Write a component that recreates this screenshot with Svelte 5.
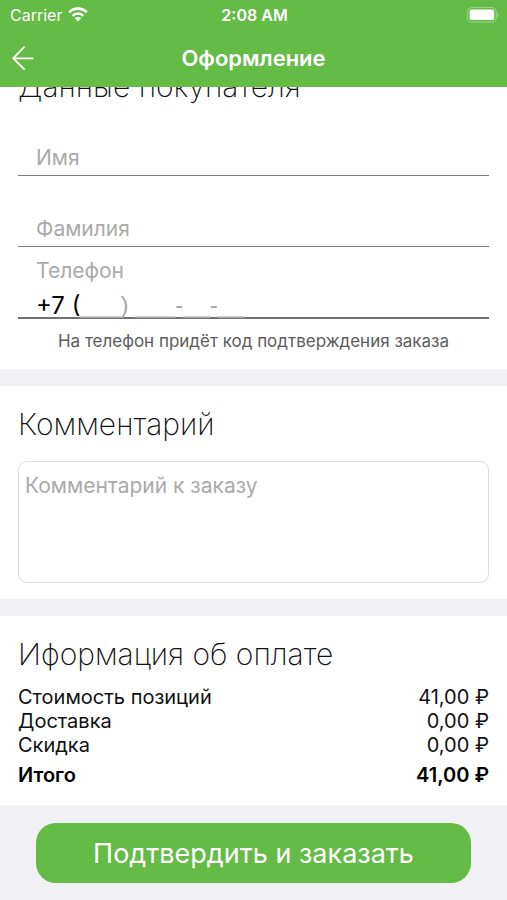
<script lang="ts">
  let firstName = $state('');
  let lastName = $state('');
  let phone = $state('+7 (');
  let comment = $state('');

  const mask = '+7 (___) ___-__-__';

  const costs = [
    { label: 'Стоимость позиций', value: '41,00 ₽' },
    { label: 'Доставка', value: '0,00 ₽' },
    { label: 'Скидка', value: '0,00 ₽' }
  ];
</script>

<div class="screen">
  <header>
    <div class="status">
      <div class="carrier">
        <span>Carrier</span>
        <svg width="20" height="15" viewBox="0 0 20 15" fill="none" stroke="#fff" aria-hidden="true">
          <path d="M1.2 5.2a12.6 12.6 0 0 1 17.6 0" stroke-width="2.6" />
          <path d="M4.5 8.8a7.9 7.9 0 0 1 11 0" stroke-width="2.5" />
          <path d="M10 14.6l-3.2-3.3a4.6 4.6 0 0 1 6.4 0z" fill="#fff" stroke="none" />
        </svg>
      </div>
      <time>2:08 AM</time>
      <svg class="battery" width="32" height="16" viewBox="0 0 32 16" aria-hidden="true">
        <rect x="0.6" y="0.6" width="28.600" height="14.4" rx="4.4" fill="none" stroke="#fff" stroke-opacity="0.4" />
        <rect x="2.600" y="2.600" width="24.6" height="10.4" rx="2" fill="#fff" />
        <path d="M30.400 5.600c1.600.8 1.600 3.800 0 4.600z" fill="#fff" fill-opacity="0.4" />
      </svg>
    </div>
    <nav>
      <button class="back" aria-label="Назад">
        <svg width="22" height="24" viewBox="0 0 22 24" fill="none" stroke="#fff" stroke-width="1.8" stroke-linecap="round" stroke-linejoin="round">
          <path d="M12 1.200L1.200 12.400L12 23M1.200 12.400H20.600" />
        </svg>
      </button>
      <h1>Оформление</h1>
    </nav>
  </header>

  <main>
    <section class="buyer">
      <h2>Данные покупателя</h2>
      <input class="line" bind:value={firstName} placeholder="Имя" aria-label="Имя" />
      <input class="line" bind:value={lastName} placeholder="Фамилия" aria-label="Фамилия" />
      <div class="phone">
        <label for="phone">Телефон</label>
        <div class="masked">
          <span class="mask" aria-hidden="true"><span class="typed">{phone}</span>{mask.slice(phone.length)}</span>
          <input id="phone" type="tel" bind:value={phone} />
        </div>
      </div>
      <p class="hint">На телефон придёт код подтверждения заказа</p>
    </section>

    <section class="comment">
      <h2>Комментарий</h2>
      <textarea bind:value={comment} placeholder="Комментарий к заказу" aria-label="Комментарий"></textarea>
    </section>

    <section class="payment">
      <h2>Иформация об оплате</h2>
      <table>
        <tbody>
          {#each costs as row}
            <tr><th scope="row">{row.label}</th><td>{row.value}</td></tr>
          {/each}
        </tbody>
        <tfoot>
          <tr><th scope="row">Итого</th><td>41,00 ₽</td></tr>
        </tfoot>
      </table>
    </section>
  </main>

  <footer>
    <button class="submit">Подтвердить и заказать</button>
  </footer>
</div>

<style>
  :global(body) {
    background: #f0f0f5;
  }

  .screen {
    min-height: 100vh;
    font-family: Inter, 'Liberation Sans', sans-serif;
    color: #111;
    overflow: hidden;
  }

  input,
  textarea,
  button {
    box-sizing: border-box;
    margin: 0;
    border: 0;
    background: none;
    font-family: inherit;
    outline: none;
  }

  header {
    position: sticky;
    top: 0;
    z-index: 1;
    background: #64bb46;
    color: #fff;
  }

  .status {
    display: grid;
    grid-template-columns: 1fr auto 1fr;
    align-items: center;
    height: 29px;
    padding: 0 8px 0 10px;
    font-size: 16px;
  }

  .carrier {
    display: flex;
    align-items: center;
    gap: 6px;
  }

  .status time {
    font-weight: 600;
  }

  .battery {
    justify-self: end;
  }

  nav {
    display: grid;
    grid-template-columns: 48px 1fr 48px;
    align-items: center;
    height: 58px;
  }

  .back {
    display: flex;
    padding: 12px;
    cursor: pointer;
  }

  h1 {
    margin: 0;
    font-size: 22px;
    line-height: 28px;
    font-weight: 600;
    text-align: center;
  }

  section {
    padding: 19px 18px 16px;
    background: #fff;
  }

  section + section {
    margin-top: 17px;
  }

  h2 {
    margin: 0;
    font-size: 30px;
    line-height: 38px;
    font-weight: 200;
  }

  /* The form is scrolled part-way under the header */
  .buyer {
    margin-top: -20px;
    padding-top: 0;
  }

  .line {
    display: block;
    width: 100%;
    height: 36px;
    margin-top: 35px;
    padding: 0 18px;
    border-bottom: 1px solid #7c7c7c;
    font-size: 21px;
  }

  ::placeholder {
    color: #aaa;
    opacity: 1;
  }

  .phone {
    padding: 10px 18px 0;
    border-bottom: 2px solid #6f736f;
  }

  .phone label {
    display: block;
    margin-bottom: 8px;
    font-size: 21px;
    line-height: 28px;
    color: #aaa;
  }

  .masked {
    display: grid;
    height: 24px;
  }

  .masked > * {
    grid-area: 1 / 1;
    font-size: 24px;
    line-height: 24px;
  }

  .masked input {
    width: 100%;
    height: 24px;
    padding: 0;
    color: #000;
  }

  .mask {
    color: #aaa;
    font-family: 'Liberation Sans', sans-serif;
    white-space: pre;
  }

  .typed {
    font-family: Inter, sans-serif;
    visibility: hidden;
  }

  .hint {
    margin: 10px 0 0;
    font-size: 17px;
    line-height: 24px;
    color: #5c5c5c;
    text-align: center;
  }

  textarea {
    display: block;
    width: 100%;
    height: 122px;
    margin-top: 18px;
    padding: 10px 6px;
    border: 1px solid #dcdcdc;
    border-radius: 9px;
    font-size: 21px;
    line-height: 28px;
    resize: none;
  }

  .payment {
    padding-bottom: 18px;
  }

  table {
    width: 100%;
    margin-top: 12px;
    border-collapse: collapse;
    font-size: 20px;
    line-height: 24px;
  }

  th,
  td {
    padding: 0;
    font-weight: 400;
    text-align: left;
  }

  td {
    text-align: right;
  }

  tfoot th,
  tfoot td {
    padding-top: 6px;
    font-weight: 600;
    color: #000;
  }

  footer {
    padding: 18px 36px;
  }

  .submit {
    width: 100%;
    height: 60px;
    border-radius: 20px;
    background: #64bb46;
    font-size: 27px;
    color: #fff;
    cursor: pointer;
  }
</style>
